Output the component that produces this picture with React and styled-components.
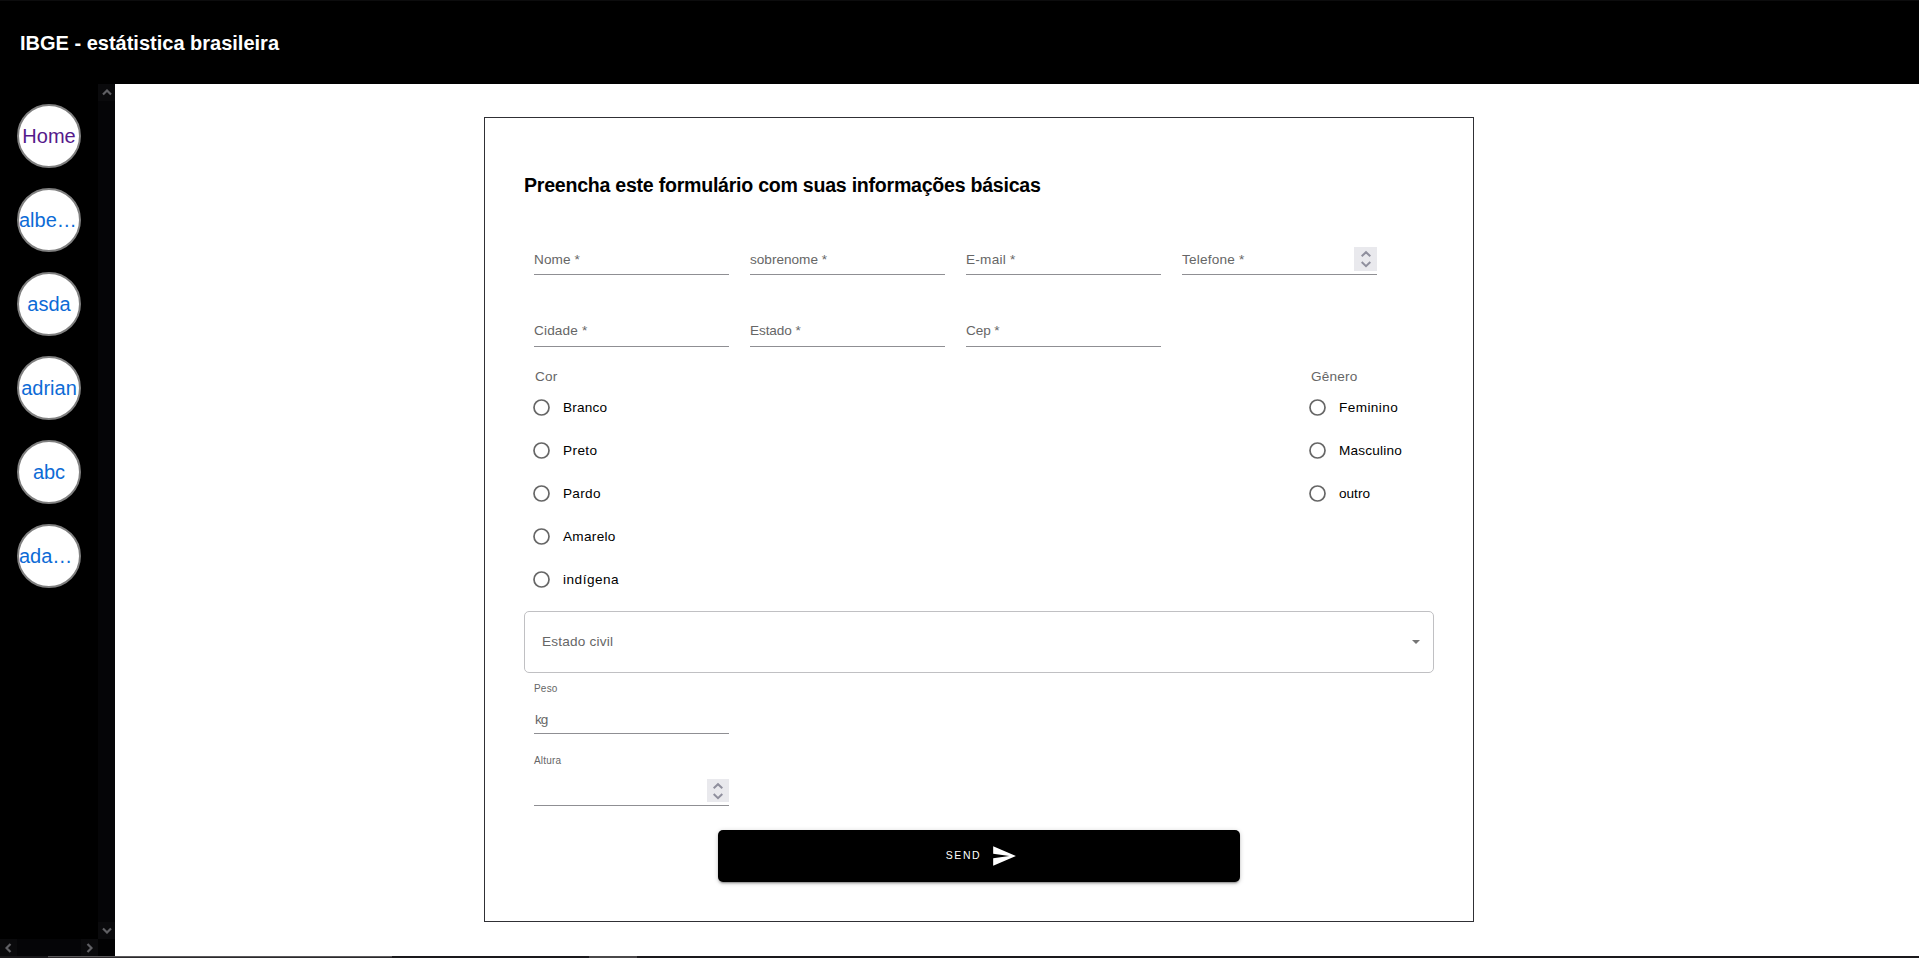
import React from "react";
import styled, { createGlobalStyle } from "styled-components";

const Global = createGlobalStyle`
  * { box-sizing: border-box; }
  html, body, #root { height: 100%; }
  body { margin: 0; background: #fff; overflow: hidden; font-family: "Liberation Sans", Arial, sans-serif; }
`;

const Page = styled.div`
  height: 958px;
  display: flex;
  flex-direction: column;
`;
const Header = styled.header`
  height: 84px;
  flex: none;
  background: #000;
  border-top: 1px solid #0c0c0d;
  padding: 0 20px;
  display: flex;
  align-items: center;
`;
const Brand = styled.h1`
  margin: 0;
  color: #fff;
  font-size: 20px;
  line-height: 24px;
`;
const Body = styled.div`
  height: 872px;
  flex: none;
  display: flex;
`;
const Sidebar = styled.aside`
  width: 115px;
  background: #000;
  display: grid;
  grid-template-columns: 98px 17px;
  grid-template-rows: 1fr 17px;
`;
const NavList = styled.nav`
  padding: 20px 0 0 17px;
  display: flex;
  flex-direction: column;
  gap: 20px;
`;
const NavCircle = styled.a`
  width: 64px;
  height: 64px;
  border: 2px solid #808080;
  border-radius: 50%;
  background: #fff;
  display: flex;
  align-items: center;
  justify-content: ${(p) => (p.$clipped ? "flex-start" : "center")};
  color: ${(p) => (p.$visited ? "#551a8b" : "#0d6bd6")};
  font-size: 20px;
  line-height: 24px;
  white-space: nowrap;
  text-decoration: none;
`;
const Scroll = styled.div`
  background: #050507;
  display: flex;
  flex-direction: ${(p) => (p.$row ? "row" : "column")};
  justify-content: space-between;
`;
const ScrollButton = styled.span`
  width: 17px;
  height: 17px;
  background: #0a0a0c;
  display: flex;
  align-items: center;
  justify-content: center;
`;
const Corner = styled.div`
  background: #020203;
`;
const Main = styled.main`
  flex: 1;
  padding: 33px 0 0 369px;
`;
const Card = styled.form`
  width: 990px;
  height: 805px;
  border: 1px solid #303035;
  padding: 0 39px;
  display: flex;
  flex-direction: column;
`;
const Title = styled.h2`
  margin: 54px 0 0;
  font-size: 19.6px;
  line-height: 26px;
  color: #000;
  letter-spacing: -0.26px;
`;
const FieldRow = styled.div`
  display: flex;
  flex: none;
  gap: 21px;
  padding-left: 10px;
  margin-top: ${(p) => p.$top}px;
`;
const Field = styled.label`
  width: 195px;
  height: 32px;
  border-bottom: 1px solid #8f8f93;
  display: flex;
  justify-content: space-between;
  align-items: flex-start;
  color: #666;
  font-size: 13.6px;
  line-height: 24px;
  letter-spacing: ${(p) => p.$ls || 0}px;
`;
const FieldText = styled.span`
  padding-top: ${(p) => p.$top || 0}px;
  padding-left: ${(p) => p.$left || 0}px;
`;
const Spinner = styled.span`
  width: ${(p) => p.$w}px;
  height: ${(p) => p.$h}px;
  margin-top: ${(p) => p.$top}px;
  background: #e9e9ed;
  display: flex;
  align-items: center;
  justify-content: center;
`;
const Groups = styled.div`
  display: flex;
  flex: none;
  height: 244px;
  margin-top: 20px;
`;
const RadioGroup = styled.div`
  width: ${(p) => p.$w}px;
  padding-left: 9px;
  display: flex;
  flex-direction: column;
`;
const Legend = styled.span`
  color: #666;
  font-size: 13.6px;
  line-height: 20px;
  height: 19px;
  letter-spacing: 0.2px;
  padding-left: 2px;
`;
const Radio = styled.label`
  height: 43px;
  flex: none;
  display: flex;
  align-items: center;
  gap: 13px;
  font-size: 13.6px;
  line-height: 20px;
  letter-spacing: ${(p) => p.$ls}px;
  color: #000;
`;
const Select = styled.div`
  height: 62px;
  flex: none;
  border: 1px solid #c0c0c3;
  border-radius: 5px;
  padding: 0 13.5px 0 17px;
  display: flex;
  align-items: center;
  justify-content: space-between;
  color: #666;
  font-size: 13.6px;
  letter-spacing: 0.2px;
`;
const SelectText = styled.span`
  padding-bottom: 2px;
`;
const Caption = styled.span`
  color: #666;
  font-size: 10px;
  line-height: 12px;
  letter-spacing: 0.2px;
  margin: ${(p) => p.$top}px 0 0 10px;
`;
const SendButton = styled.button`
  width: 522px;
  height: 52px;
  flex: none;
  align-self: center;
  margin: 24px 0 0;
  padding: 0 0 0 5px;
  border: 0;
  border-radius: 5px;
  background: #000;
  color: #fff;
  box-shadow: 0 3px 1px -2px rgba(0,0,0,.2), 0 2px 2px rgba(0,0,0,.14), 0 1px 5px rgba(0,0,0,.2);
  display: flex;
  align-items: center;
  justify-content: center;
  gap: 10px;
  font: 10.5px/20px "Liberation Sans", Arial, sans-serif;
  letter-spacing: 1.6px;
`;
const SendText = styled.span`
  padding-bottom: 2px;
`;
const Taskbar = styled.div`
  height: 2px;
  flex: none;
  background: #1a191c;
  display: flex;
`;
const TaskSegment = styled.span`
  height: 2px;
  width: ${(p) => p.$w}px;
  margin-left: ${(p) => p.$left}px;
  background: ${(p) => p.$color};
  border-top: 1px solid ${(p) => p.$edge || p.$color};
`;

const paths = {
  up: "M1 5.5 5 1.5 9 5.5",
  down: "M1 1.5 5 5.5 9 1.5",
  left: "M5.5 1 1.5 5 5.5 9",
  right: "M1.5 1 5.5 5 1.5 9",
};
function Chevron({ dir }) {
  const vertical = dir === "up" || dir === "down";
  return (
    <svg width={vertical ? 10 : 7} height={vertical ? 7 : 10} fill="none" stroke="#606064" strokeWidth="2.2">
      <path d={paths[dir]} />
    </svg>
  );
}
function NumberSpinner(props) {
  return (
    <Spinner {...props}>
      <svg width="12" height="18" fill="none" stroke="#8f8f9d" strokeWidth="2">
        <path d="M1.7 6.3 6 2.2 10.3 6.3M1.7 12 6 16.1 10.3 12" />
      </svg>
    </Spinner>
  );
}

const links = ["Home", "albe…", "asda", "adrian", "abc", "ada…"];
const colors = [["Branco", 0.2], ["Preto", 0.4], ["Pardo", 0.3], ["Amarelo", 0.3], ["indígena", 0.5]];
const genders = [["Feminino", 0.4], ["Masculino", 0.2], ["outro", 0]];

function Options({ title, items, width }) {
  return (
    <RadioGroup $w={width}>
      <Legend>{title}</Legend>
      {items.map(([name, ls]) => (
        <Radio key={name} $ls={ls}>
          <svg width="17" height="17" fill="none" stroke="#666" strokeWidth="1.7">
            <circle cx="8.5" cy="8.5" r="7.5" />
          </svg>
          {name}
        </Radio>
      ))}
    </RadioGroup>
  );
}

export default function App() {
  return (
    <Page>
      <Global />
      <Header>
        <Brand>IBGE - estátistica brasileira</Brand>
      </Header>
      <Body>
        <Sidebar>
          <NavList>
            {links.map((name, i) => (
              <NavCircle key={name} $visited={i === 0} $clipped={name.endsWith("…")}>
                {name}
              </NavCircle>
            ))}
          </NavList>
          <Scroll>
            <ScrollButton><Chevron dir="up" /></ScrollButton>
            <ScrollButton><Chevron dir="down" /></ScrollButton>
          </Scroll>
          <Scroll $row>
            <ScrollButton><Chevron dir="left" /></ScrollButton>
            <ScrollButton><Chevron dir="right" /></ScrollButton>
          </Scroll>
          <Corner />
        </Sidebar>
        <Main>
          <Card>
            <Title>Preencha este formulário com suas informações básicas</Title>
            <FieldRow $top={45}>
              <Field $ls={0.1}><FieldText $top={5}>Nome *</FieldText></Field>
              <Field $ls={0}><FieldText $top={5}>sobrenome *</FieldText></Field>
              <Field $ls={0.25}><FieldText $top={5}>E-mail *</FieldText></Field>
              <Field $ls={0.2}>
                <FieldText $top={5}>Telefone *</FieldText>
                <NumberSpinner $w={23} $h={24} $top={4} />
              </Field>
            </FieldRow>
            <FieldRow $top={40}>
              <Field $ls={0.15}><FieldText $top={4}>Cidade *</FieldText></Field>
              <Field $ls={-0.1}><FieldText $top={4}>Estado *</FieldText></Field>
              <Field $ls={-0.1}><FieldText $top={4}>Cep *</FieldText></Field>
            </FieldRow>
            <Groups>
              <Options title="Cor" items={colors} width={776} />
              <Options title="Gênero" items={genders} width={120} />
            </Groups>
            <Select>
              <SelectText>Estado civil</SelectText>
              <svg width="8" height="4"><path d="M0 0H8L4 4Z" fill="#757575" /></svg>
            </Select>
            <Caption $top={10}>Peso</Caption>
            <FieldRow $top={7}>
              <Field $ls={-1}><FieldText $top={6} $left={1}>kg</FieldText></Field>
            </FieldRow>
            <Caption $top={21}>Altura</Caption>
            <FieldRow $top={7}>
              <Field>
                <span />
                <NumberSpinner $w={22} $h={23} $top={5} />
              </Field>
            </FieldRow>
            <SendButton type="button">
              <SendText>SEND</SendText>
              <svg width="26" height="26" viewBox="0 0 24 24" fill="#fff">
                <path d="M2.01 21 23 12 2.01 3 2 10l15 2-15 2z" />
              </svg>
            </SendButton>
          </Card>
        </Main>
      </Body>
      <Taskbar>
        <TaskSegment $w={344} $left={48} $color="#2c2a2d" $edge="#5a585a" />
        <TaskSegment $w={48} $left={197} $color="#4a484a" />
      </Taskbar>
    </Page>
  );
}
